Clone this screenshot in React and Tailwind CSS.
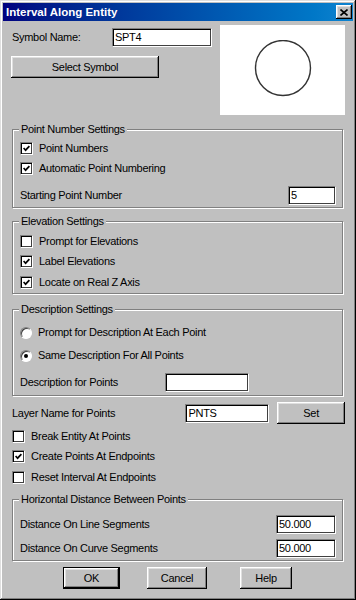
const raised =
  "bg-[#c0c0c0] shadow-[inset_-1px_-1px_0_#000,inset_1px_1px_0_#fff,inset_-2px_-2px_0_#808080,inset_2px_2px_0_#dfdfdf]";
const sunken =
  "bg-white border border-t-[#808080] border-l-[#808080] border-r-white border-b-white shadow-[inset_1px_1px_0_#000,inset_-1px_-1px_0_#404040]";

const Check = ({ checked, label, className = "" }) => (
  <div className={"flex items-center h-[20px] " + className}>
    <div
      className={
        "w-[13px] h-[13px] flex items-center justify-center shrink-0 " + sunken
      }
    >
      {checked && (
        <svg width="7" height="7" viewBox="0 0 7 7">
          <polyline
            points="0.6,3 2.6,5.2 6.4,1.2"
            fill="none"
            stroke="#000"
            strokeWidth="1.7"
          />
        </svg>
      )}
    </div>
    <span className="ml-[6px]">{label}</span>
  </div>
);

const Radio = ({ checked, label }) => (
  <div className="flex items-center h-[23px]">
    <div className="w-[12px] h-[12px] rounded-full bg-white border border-t-[#808080] border-l-[#808080] border-r-white border-b-white shadow-[inset_1px_1px_0_#404040] flex items-center justify-center shrink-0">
      {checked && <div className="w-[4px] h-[4px] rounded-full bg-black" />}
    </div>
    <span className="ml-[6px]">{label}</span>
  </div>
);

const Field = ({ value = "", className = "" }) => (
  <div className={"h-[19px] px-[2px] flex items-center " + sunken + " " + className}>
    <span className="text-[11px]">{value}</span>
  </div>
);

const Group = ({ title, className = "", children }) => (
  <div
    className={
      "relative mr-[2px] border border-[#808080] shadow-[inset_1px_1px_0_#fff,1px_1px_0_#fff] " +
      className
    }
  >
    <span className="absolute left-[6px] top-[-7px] leading-[13px] px-[2px] bg-[#c0c0c0]">
      {title}
    </span>
    {children}
  </div>
);

const Button = ({ label, className = "", isDefault }) => (
  <div
    className={
      "flex items-center justify-center " +
      (isDefault ? "border border-black " : "") +
      className
    }
  >
    <div className={"w-full h-full flex items-center justify-center " + raised}>
      {label}
    </div>
  </div>
);

export default function App() {
  return (
    <div className="w-[356px] h-[600px] p-[3px] bg-[#c0c0c0] text-black text-[11px] tracking-[-0.3px] leading-[13px] font-['Liberation_Sans',Arial,sans-serif] shadow-[inset_-1px_-1px_0_#000,inset_1px_1px_0_#dfdfdf,inset_-2px_-2px_0_#808080,inset_2px_2px_0_#fff] overflow-hidden">
      {/* title bar */}
      <div className="h-[18px] flex items-center justify-between pl-[3px] pr-[1px] bg-gradient-to-r from-[#000080] to-[#1084d0]">
        <span className="text-white font-bold text-[11.5px] tracking-[0px]">
          Interval Along Entity
        </span>
        <div className={"w-[16px] h-[14px] flex items-center justify-center " + raised}>
          <svg width="8" height="7" viewBox="0 0 8 7">
            <path d="M0.5 0.5L7.5 6.5M7.5 0.5L0.5 6.5" stroke="#000" strokeWidth="1.6" />
          </svg>
        </div>
      </div>

      <div className="pl-[9px] pr-[8px]">
        {/* symbol row */}
        <div className="mt-[4px] flex h-[90px]">
          <div className="flex-1 pt-[3px]">
            <div className="flex items-center">
              <span className="w-[100px]">Symbol Name:</span>
              <Field value="SPT4" className="w-[100px]" />
            </div>
            <Button label="Select Symbol" className="mt-[9px] -ml-[1px] w-[148px] h-[22px]" />
          </div>
          <div className="w-[125px] h-[90px] bg-white flex items-center justify-center">
            <svg width="60" height="60" viewBox="0 0 60 60">
              <circle cx="30" cy="28" r="27.5" fill="none" stroke="#333" strokeWidth="1.4" />
            </svg>
          </div>
        </div>

        <Group title="Point Number Settings" className="mt-[14px] h-[79px] pt-[8px] pl-[7px] pr-[6px]">
          <Check checked label="Point Numbers" />
          <Check checked label="Automatic Point Numbering" />
          <div className="mt-[8px] flex items-center justify-between">
            <span>Starting Point Number</span>
            <Field value="5" className="w-[48px]" />
          </div>
        </Group>

        <Group title="Elevation Settings" className="mt-[13px] h-[73px] pt-[9px] pl-[7px]">
          <Check label="Prompt for Elevations" />
          <Check checked label="Label Elevations" className="h-[21px]" />
          <Check checked label="Locate on Real Z Axis" />
        </Group>

        <Group title="Description Settings" className="mt-[15px] h-[87px] pt-[11px] pl-[7px]">
          <Radio label="Prompt for Description At Each Point" />
          <Radio checked label="Same Description For All Points" />
          <div className="mt-[6px] flex items-center">
            <span className="w-[145px]">Description for Points</span>
            <Field className="w-[84px] h-[19px]" />
          </div>
        </Group>

        <div className="mt-[6px] h-[22px] flex items-center">
          <span className="w-[174px]">Layer Name for Points</span>
          <Field value="PNTS" className="w-[84px]" />
          <Button label="Set" className="ml-[8px] w-[68px] h-[22px]" />
        </div>

        <div className="mt-[2px]">
          <Check label="Break Entity At Points" />
          <Check checked label="Create Points At Endpoints" className="h-[21px]" />
          <Check label="Reset Interval At Endpoints" />
        </div>

        <Group title="Horizontal Distance Between Points" className="mt-[12px] h-[62px] pt-[15px] pl-[7px] pr-[6px]">
          <div className="flex items-center justify-between">
            <span>Distance On Line Segments</span>
            <Field value="50.000" className="w-[60px]" />
          </div>
          <div className="mt-[5px] flex items-center justify-between">
            <span>Distance On Curve Segments</span>
            <Field value="50.000" className="w-[60px]" />
          </div>
        </Group>

        <div className="mt-[6px] flex pl-[51px]">
          <Button isDefault label="OK" className="w-[57px] h-[22px]" />
          <Button label="Cancel" className="ml-[27px] w-[60px] h-[22px]" />
          <Button label="Help" className="ml-[33px] w-[52px] h-[22px]" />
        </div>
      </div>
    </div>
  );
}
